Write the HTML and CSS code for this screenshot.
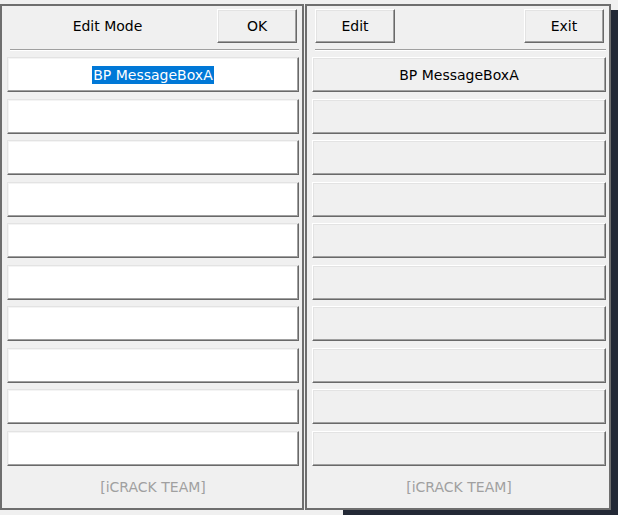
FILE: index.html
```html
<!DOCTYPE html>
<html>
<head>
<meta charset="utf-8">
<link rel="stylesheet" href="styles.css">
</head>
<body>
<div class="backdrop"></div>
<div class="desktop">
  <div class="window win-left">
    <div class="header">
      <div class="label">Edit Mode</div>
      <div class="btn btn-ok">OK</div>
    </div>
    <div class="sep"></div>
    <div class="rows">
      <div class="row row-edit"><span class="sel">BP MessageBoxA</span></div>
      <div class="row row-edit"></div>
      <div class="row row-edit"></div>
      <div class="row row-edit"></div>
      <div class="row row-edit"></div>
      <div class="row row-edit"></div>
      <div class="row row-edit"></div>
      <div class="row row-edit"></div>
      <div class="row row-edit"></div>
      <div class="row row-edit"></div>
    </div>
    <div class="footer">[iCRACK TEAM]</div>
  </div>
  <div class="window win-right">
    <div class="header header-right">
      <div class="btn">Edit</div>
      <div class="btn">Exit</div>
    </div>
    <div class="sep"></div>
    <div class="rows">
      <div class="row btn">BP MessageBoxA</div>
      <div class="row btn"></div>
      <div class="row btn"></div>
      <div class="row btn"></div>
      <div class="row btn"></div>
      <div class="row btn"></div>
      <div class="row btn"></div>
      <div class="row btn"></div>
      <div class="row btn"></div>
      <div class="row btn"></div>
    </div>
    <div class="footer">[iCRACK TEAM]</div>
  </div>
</div>
</body>
</html>
```
FILE: styles.css
```css
* { box-sizing: border-box; }
html, body { margin: 0; }
body {
  width: 618px;
  height: 515px;
  overflow: hidden;
  position: relative;
  background: #f0f0f0;
  font-family: "DejaVu Sans", "Noto Sans", sans-serif;
  font-size: 14px;
  color: #000000;
}
.backdrop {
  position: absolute;
  left: 343px;
  top: 10px;
  right: 0;
  bottom: 0;
  background: #232936;
}
.desktop {
  position: relative;
  display: flex;
  padding-top: 4px;
}
.window {
  height: 506px;
  border: 2px solid #6e6e6e;
  background: #f0f0f0;
  display: flex;
  flex-direction: column;
  padding: 3px 3px 0 5px;
}
.win-left { width: 304px; }
.win-right { width: 306px; margin-left: 1px; }
.header {
  height: 34px;
  display: flex;
  align-items: center;
}
.header-right {
  justify-content: space-between;
  padding: 0 2px 0 3px;
}
.label {
  flex: 1;
  text-align: center;
  padding-right: 4px;
}
.btn {
  height: 34px;
  width: 80px;
  display: flex;
  align-items: center;
  justify-content: center;
  background: #f0f0f0;
  border-top: 1px solid #ffffff;
  border-left: 1px solid #ffffff;
  border-right: 1px solid #696969;
  border-bottom: 1px solid #696969;
  box-shadow: inset -1px -1px 0 #a0a0a0, inset 1px 1px 0 #e3e3e3;
}
.btn-ok { margin-left: 5px; margin-right: 2px; }
.sep {
  margin: 6px 0 6px 3px;
  height: 2px;
  border-top: 1px solid #a0a0a0;
  border-bottom: 1px solid #ffffff;
}
.rows {
  display: flex;
  flex-direction: column;
  gap: 6.56px;
}
.row {
  width: auto;
  height: 35px;
  display: flex;
  align-items: center;
  justify-content: center;
}
.row-edit {
  background: #ffffff;
  border-top: 1px solid #e3e3e3;
  border-left: 1px solid #e3e3e3;
  border-right: 1px solid #696969;
  border-bottom: 1px solid #696969;
  box-shadow: inset -1px -1px 0 #a0a0a0, inset 1px 1px 0 #f4f4f4;
}
.sel {
  background: #0078d7;
  color: #ffffff;
  padding: 1px 1px;
}
.footer {
  flex: 1;
  display: flex;
  align-items: center;
  justify-content: center;
  color: #a0a0a0;
}
```
